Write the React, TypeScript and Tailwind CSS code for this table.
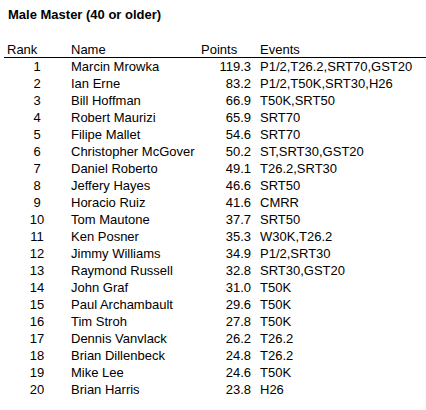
import React from 'react';

interface Row {
  rank: number;
  name: string;
  points: string;
  events: string;
}

const rows: Row[] = [
  { rank: 1, name: 'Marcin Mrowka', points: '119.3', events: 'P1/2,T26.2,SRT70,GST20' },
  { rank: 2, name: 'Ian Erne', points: '83.2', events: 'P1/2,T50K,SRT30,H26' },
  { rank: 3, name: 'Bill Hoffman', points: '66.9', events: 'T50K,SRT50' },
  { rank: 4, name: 'Robert Maurizi', points: '65.9', events: 'SRT70' },
  { rank: 5, name: 'Filipe Mallet', points: '54.6', events: 'SRT70' },
  { rank: 6, name: 'Christopher McGover', points: '50.2', events: 'ST,SRT30,GST20' },
  { rank: 7, name: 'Daniel Roberto', points: '49.1', events: 'T26.2,SRT30' },
  { rank: 8, name: 'Jeffery Hayes', points: '46.6', events: 'SRT50' },
  { rank: 9, name: 'Horacio Ruiz', points: '41.6', events: 'CMRR' },
  { rank: 10, name: 'Tom Mautone', points: '37.7', events: 'SRT50' },
  { rank: 11, name: 'Ken Posner', points: '35.3', events: 'W30K,T26.2' },
  { rank: 12, name: 'Jimmy Williams', points: '34.9', events: 'P1/2,SRT30' },
  { rank: 13, name: 'Raymond Russell', points: '32.8', events: 'SRT30,GST20' },
  { rank: 14, name: 'John Graf', points: '31.0', events: 'T50K' },
  { rank: 15, name: 'Paul Archambault', points: '29.6', events: 'T50K' },
  { rank: 16, name: 'Tim Stroh', points: '27.8', events: 'T50K' },
  { rank: 17, name: 'Dennis Vanvlack', points: '26.2', events: 'T26.2' },
  { rank: 18, name: 'Brian Dillenbeck', points: '24.8', events: 'T26.2' },
  { rank: 19, name: 'Mike Lee', points: '24.6', events: 'T50K' },
  { rank: 20, name: 'Brian Harris', points: '23.8', events: 'H26' },
];

export default function App() {
  return (
    <div className="w-[426px] h-[410px] bg-white text-black font-['Liberation_Sans',Arial,sans-serif] text-[13px] leading-[17px] overflow-hidden">
      {/* Title */}
      <div className="pl-[8px] pt-[6px] h-[23px] font-bold">Male Master (40 or older)</div>

      {/* Header */}
      <div className="ml-[4px] mt-[18px] flex h-[17px] border-b border-black">
        <div className="w-[66px] pl-[3px]">Rank</div>
        <div className="w-[128px] pl-[1px]">Name</div>
        <div className="w-[60px] pl-[3px]">Points</div>
        <div className="pl-[2px]">Events</div>
      </div>

      {/* Rows */}
      {rows.map((r) => (
        <div key={r.rank} className="ml-[4px] flex h-[17px]">
          <div className="w-[66px] text-center">{r.rank}</div>
          <div className="w-[128px] pl-[1px] whitespace-nowrap">{r.name}</div>
          <div className="w-[60px] pr-[7px] text-right">{r.points}</div>
          <div className="pl-[2px] whitespace-nowrap">{r.events}</div>
        </div>
      ))}
    </div>
  );
}
